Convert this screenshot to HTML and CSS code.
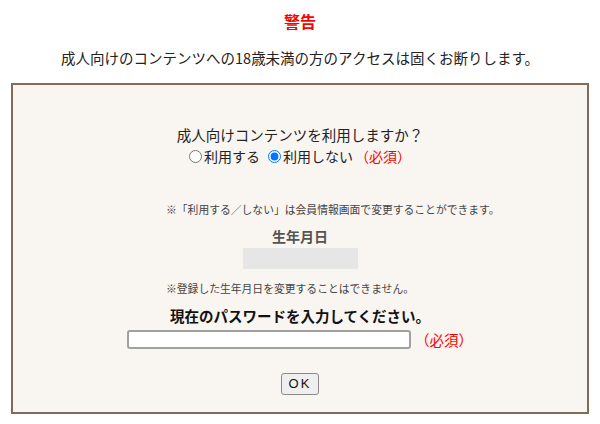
FILE: index.html
```html
<!DOCTYPE html>
<html lang="ja">
<head>
    <meta charset="UTF-8">
    <meta name="viewport" content="width=device-width, initial-scale=1.0">
    <title>警告</title>

    <link rel="stylesheet" href="styles.css">
</head>
<body>
    <h1>警告</h1>
    <p class="lead">成人向けのコンテンツへの18歳未満の方のアクセスは固くお断りします。</p>

    <form action="" class="age-box" id="ageForm">
        <p class="question">成人向けコンテンツを利用しますか？</p>
        <div class="radio-row">
            <label><input type="radio" name="adult" value="1">利用する</label>
            <label><input type="radio" name="adult" value="0" checked>利用しない</label>
            <span class="required">（必須）</span>
        </div>

        <p class="note note-top">※「利用する／しない」は会員情報画面で変更することができます。</p>

        <h2 class="birth-label">生年月日</h2>
        <div class="birth-value"></div>
        <p class="note note-birth">※登録した生年月日を変更することはできません。</p>

        <h2 class="pass-label">現在のパスワードを入力してください。</h2>
        <div class="pass-row">
            <input type="password" name="password" id="password">
            <span class="required">（必須）</span>
        </div>

        <div class="button-row">
            <button type="submit">OK</button>
        </div>
    </form>
</body>
</html>
```

FILE: styles.css
```css
* {
    margin: 0;
    padding: 0;
    box-sizing: border-box;
}

body {
    font-family: "Noto Sans CJK JP", "Noto Sans", sans-serif;
    font-size: 14.5px;
    color: #222;
    background: #fff;
}

h1 {
    margin-top: 11px;
    font-size: 16px;
    line-height: 20px;
    color: #ff0000;
    text-align: center;
}

.lead {
    margin-top: 17px;
    line-height: 20px;
    text-align: center;
}

.age-box {
    margin: 15px 11px 0 11px;
    padding: 40px 0 17px;
    background: #f9f5f1;
    border: 2px solid #806c58;
    text-align: center;
}

.question {
    line-height: 20px;
}

.radio-row {
    margin-top: 1px;
    display: flex;
    justify-content: center;
    align-items: center;
    height: 20px;
    line-height: 20px;
    font-size: 14px;
}

.radio-row label {
    display: flex;
    align-items: center;
    margin-right: 8px;
}

.radio-row label + label {
    margin-right: 2px;
}

.radio-row input {
    margin: 0 2px 0 0;
    width: 13px;
    height: 13px;
}

.required {
    color: #ff0000;
}

.note {
    font-size: 10.8px;
    line-height: 16px;
    color: #444;
    text-align: left;
    margin-left: 153px;
}

.note-top {
    margin-top: 35px;
}

.birth-label {
    margin-top: 9px;
    font-size: 14px;
    line-height: 20px;
    color: #555;
}

.birth-value {
    width: 115px;
    height: 21px;
    margin: 2px auto 0;
    background: #e6e6e6;
}

.note-birth {
    margin-top: 11px;
}

.pass-label {
    margin-top: 10px;
    font-size: 14.5px;
    line-height: 20px;
    color: #111;
}

.pass-row {
    margin-top: 4px;
    display: flex;
    justify-content: center;
    align-items: center;
    gap: 4px;
    height: 19px;
}

.pass-row input {
    width: 284px;
    height: 19px;
    border: 2px solid #a0a0a0;
    border-radius: 3px;
    background: #fff;
}

.button-row {
    margin-top: 22px;
}

button {
    height: 22px;
    padding: 0 7px;
    font-family: "Liberation Sans", Arial, sans-serif;
    font-size: 13px;
    letter-spacing: 2px;
    color: #111;
    background: #efefef;
    border: 1px solid #8a8a8a;
    border-radius: 3px;
    cursor: pointer;
}
```
